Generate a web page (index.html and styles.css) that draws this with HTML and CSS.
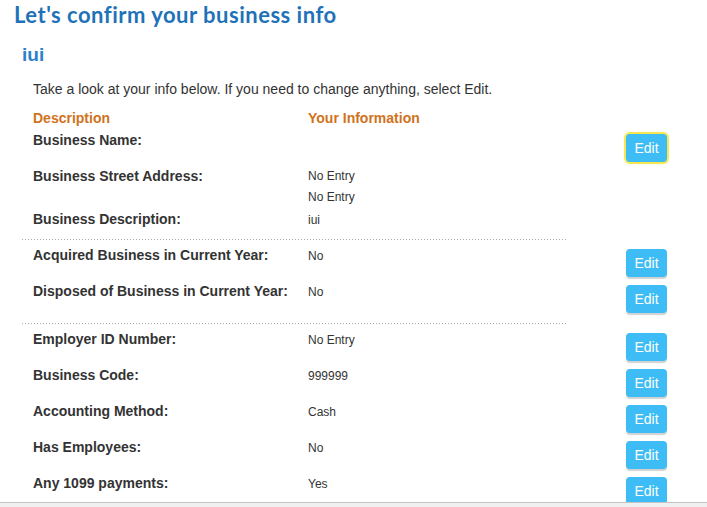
FILE: index.html
```html
<!DOCTYPE html>
<html lang="en">
<head>
<meta charset="utf-8">
<title>Let's confirm your business info</title>
<link rel="stylesheet" href="styles.css">
</head>
<body>
<div class="page">
  <h1 class="title">Let's confirm your business info</h1>
  <div class="content">
    <h2 class="biz-name">iui</h2>
    <p class="intro">Take a look at your info below. If you need to change anything, select Edit.</p>

    <div class="grid head">
      <div class="col-head">Description</div>
      <div class="col-head">Your Information</div>
    </div>

    <div class="grid sec sec-first">
      <div class="label">Business Name:</div>
      <div class="value"></div>
      <button class="btn-edit focused">Edit</button>

      <div class="label">Business Street Address:</div>
      <div class="value multi"><div>No Entry</div><div>No Entry</div></div>
      <div></div>

      <div class="label">Business Description:</div>
      <div class="value">iui</div>
      <div></div>
    </div>
    <div class="sep"></div>

    <div class="grid sec">
      <div class="label">Acquired Business in Current Year:</div>
      <div class="value">No</div>
      <button class="btn-edit">Edit</button>

      <div class="label">Disposed of Business in Current Year:</div>
      <div class="value">No</div>
      <button class="btn-edit">Edit</button>
    </div>
    <div class="sep"></div>

    <div class="grid sec">
      <div class="label">Employer ID Number:</div>
      <div class="value">No Entry</div>
      <button class="btn-edit">Edit</button>

      <div class="label">Business Code:</div>
      <div class="value">999999</div>
      <button class="btn-edit">Edit</button>

      <div class="label">Accounting Method:</div>
      <div class="value">Cash</div>
      <button class="btn-edit">Edit</button>

      <div class="label">Has Employees:</div>
      <div class="value">No</div>
      <button class="btn-edit">Edit</button>

      <div class="label">Any 1099 payments:</div>
      <div class="value">Yes</div>
      <button class="btn-edit">Edit</button>
    </div>
  </div>
</div>
<div class="footer-bar"></div>
</body>
</html>
```
FILE: styles.css
```css
html, body {
  margin: 0;
  padding: 0;
  background: #ffffff;
}
body {
  font-family: "Liberation Sans", Arial, sans-serif;
  color: #333333;
  overflow: hidden;
}
.page {
  padding: 1px 0 0 14px;
}
.title {
  margin: 0;
  font-family: Lato, "Open Sans", sans-serif;
  font-weight: 700;
  font-size: 22px;
  letter-spacing: 0.5px;
  line-height: 28px;
  color: #1f72b8;
}
.content {
  margin-left: 8px;
  width: 645px;
}
.biz-name {
  margin: 14px 0 0 0;
  font-family: "Liberation Sans", Arial, sans-serif;
  font-weight: 700;
  font-size: 19px;
  line-height: 24px;
  color: #2b7fcb;
}
.intro {
  margin: 12px 0 0 0;
  padding-left: 11px;
  font-size: 14px;
  line-height: 20px;
  color: #333333;
}
.grid {
  display: grid;
  grid-template-columns: 275px 1fr 41px;
  padding-left: 11px;
  align-items: start;
}
.head {
  margin-top: 9px;
}
.col-head {
  font-size: 14px;
  font-weight: 700;
  line-height: 20px;
  color: #d0721c;
}
.sec {
  padding: 5px 0 10px 11px;
  row-gap: 4px;
}
.sec-first {
  padding-top: 2px;
  row-gap: 1px;
}
.sec-first .btn-edit {
  margin-bottom: 3px;
}
.label {
  font-size: 14px;
  font-weight: 700;
  line-height: 20px;
  color: #333333;
}
.value {
  padding-top: 2px;
  font-size: 12px;
  line-height: 18px;
  color: #333333;
}
.value.multi {
  padding-top: 0;
  line-height: 21px;
}
.btn-edit {
  margin-top: 4px;
  width: 41px;
  height: 28px;
  padding: 0;
  border: none;
  border-radius: 4px;
  background: #3dbcf5;
  color: #ffffff;
  font-family: "Liberation Sans", Arial, sans-serif;
  font-size: 14px;
  line-height: 28px;
  text-align: center;
  box-shadow: 0 2px 1px rgba(0, 0, 0, 0.18);
  cursor: pointer;
}
.btn-edit.focused {
  box-shadow: 0 0 1px 2px #f8e54a;
}
.sep {
  width: 545px;
  height: 1px;
  background-image: linear-gradient(to right, #a9a9a9 1px, transparent 1px);
  background-size: 3px 1px;
}
.footer-bar {
  position: fixed;
  left: 0;
  right: 0;
  bottom: 0;
  height: 4px;
  border-top: 1px solid #c4c4c4;
  background: #f0f0f0;
}
```
